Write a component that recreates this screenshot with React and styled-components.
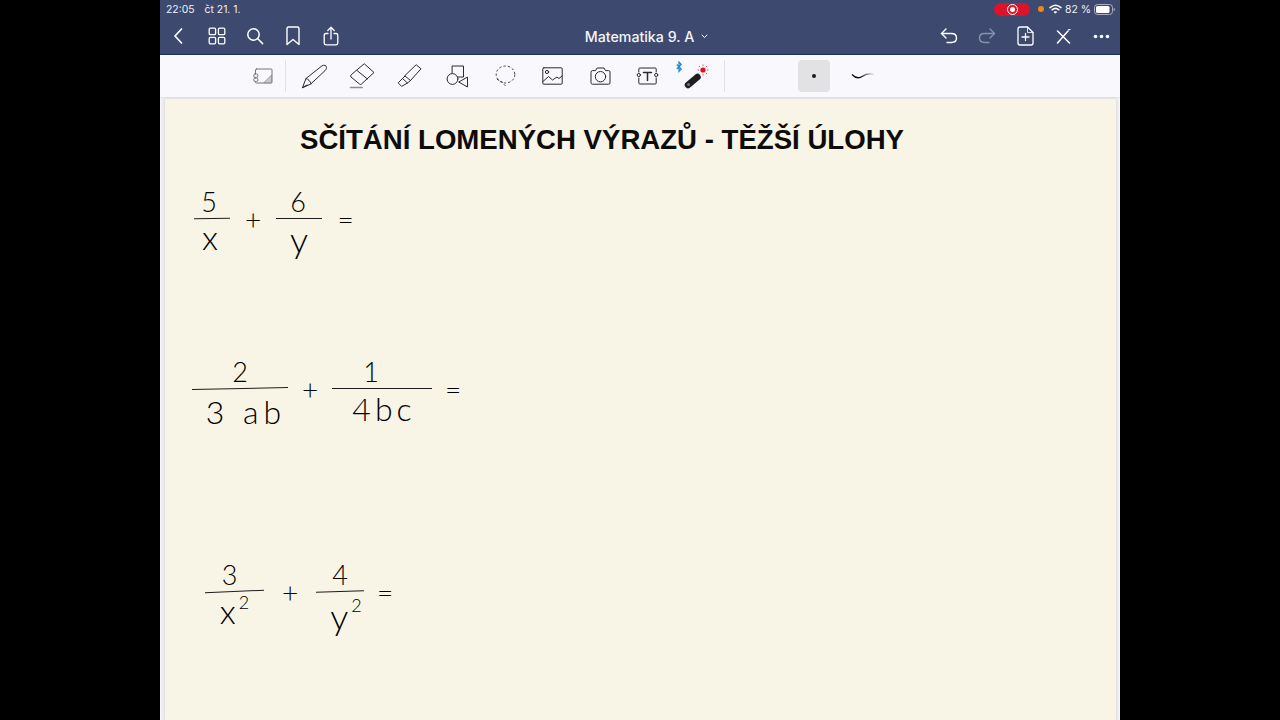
import React from 'react'
import styled, { createGlobalStyle } from 'styled-components'

const Global = createGlobalStyle`
  html, body { margin: 0; background: #000; height: 100%; overflow: hidden; }
`

const Screen = styled.div`
  width: 960px;
  height: 720px;
  margin: 0 auto;
  display: flex;
  flex-direction: column;
  overflow: hidden;
  background: #eeeef1;
  font-family: Inter, "Liberation Sans", sans-serif;
`

const Header = styled.header`
  height: 54px;
  background: #3d496f;
  border-bottom: 1px solid #16345a;
  color: #fff;
  flex: none;
`

const StatusBar = styled.div`
  height: 18px;
  display: flex;
  align-items: center;
  justify-content: space-between;
  padding: 0 5px 0 6px;
  font-size: 10.4px;
  color: #f1f2f6;
`

const StatusGroup = styled.div`
  display: flex;
  align-items: center;
  gap: ${(p) => p.$gap}px;
`

const RecordPill = styled.div`
  width: 36px;
  height: 13px;
  border-radius: 7px;
  background: #dc1429;
  display: flex;
  align-items: center;
  justify-content: center;
  margin-right: 5px;
`

const RecordDot = styled.div`
  width: 5px;
  height: 5px;
  border-radius: 50%;
  background: #fff;
  border: 2px solid #dc1429;
  outline: 1px solid #fff;
`

const OrangeDot = styled.div`
  width: 6px;
  height: 6px;
  border-radius: 50%;
  background: #ee8a12;
  margin-right: 2px;
`

const Nav = styled.nav`
  height: 36px;
  display: grid;
  grid-template-columns: 1fr auto 1fr;
  align-items: center;
`

const NavGroup = styled.div`
  display: flex;
  justify-content: ${(p) => (p.$end ? 'flex-end' : 'flex-start')};
`

const NavButton = styled.div`
  width: 38px;
  height: 36px;
  display: flex;
  align-items: center;
  justify-content: center;
  opacity: ${(p) => (p.$dim ? 0.4 : 1)};
`

const DocTitle = styled.div`
  display: flex;
  align-items: center;
  gap: 7px;
  padding-left: 13px;
  font-size: 14.2px;
  font-weight: 500;
  color: #f4f5f8;
`

const Toolbar = styled.div`
  height: 42px;
  flex: none;
  display: flex;
  align-items: center;
  background: #f9f8fc;
  border-bottom: 1px solid #e4e3e6;
  padding-left: 83px;
`

const Tool = styled.div`
  width: ${(p) => p.$w || 47.6}px;
  height: 42px;
  flex: none;
  display: flex;
  align-items: center;
  justify-content: center;
`

const Divider = styled.div`
  width: 1px;
  height: 32px;
  background: #e2e1e4;
  margin: 0 ${(p) => p.$right}px 0 ${(p) => p.$left}px;
  flex: none;
`

const SizeButton = styled.div`
  width: 32px;
  height: 32px;
  border-radius: 4px;
  background: #e2e1e3;
  display: flex;
  align-items: center;
  justify-content: center;
  margin: 0 21px 0 0;
  flex: none;
`

const SizeDot = styled.div`
  width: 4px;
  height: 4px;
  border-radius: 50%;
  background: #1a1a1a;
`

const Desk = styled.main`
  flex: 1;
  padding: 1px 4px 0 5px;
  min-height: 0;
  box-shadow: inset 1px 0 0 #f7f7f9, inset -1px 0 0 #f7f7f9;
`

const Page = styled.section`
  position: relative;
  height: 100%;
  background: #f8f4e6;
  box-shadow: 0 0 2px #c9c9cc;
  padding: 23px 0 0 135px;
  box-sizing: border-box;
`

const Title = styled.h1`
  margin: 0;
  font-family: "Liberation Sans", Arial, sans-serif;
  font-size: 27.6px;
  line-height: 36px;
  font-weight: 700;
  color: #0c0c0c;
  white-space: nowrap;
`

/* ruční poznámky leží na volném plátně stránky */
const Expr = styled.div`
  position: absolute;
  left: ${(p) => p.$x}px;
  top: ${(p) => p.$y}px;
  display: flex;
  align-items: center;
  font-family: Lato, "Open Sans", sans-serif;
  font-weight: 300;
  color: #000;
`

const Frac = styled.div`
  width: ${(p) => p.$w}px;
  flex: none;
  display: flex;
  flex-direction: column;
  align-items: center;
`

const Num = styled.div`
  height: 34px;
  display: flex;
  align-items: flex-end;
  justify-content: center;
  font-size: 27px;
  line-height: 32px;
  white-space: nowrap;
  transform: translate(${(p) => p.$dx || 0}px, 0);
`

const Den = styled.div`
  height: 34px;
  display: flex;
  align-items: flex-start;
  justify-content: center;
  font-size: ${(p) => p.$size || 30}px;
  line-height: normal;
  white-space: nowrap;
  letter-spacing: ${(p) => p.$track || 0}px;
  transform: translate(${(p) => p.$dx || 0}px, ${(p) => p.$dy || 0}px);
`

const Bar = styled.div`
  width: 100%;
  height: 1.4px;
  background: #1c1c1c;
  transform: rotate(${(p) => p.$tilt || 0}deg);
`

const Sign = styled.div`
  flex: none;
  width: ${(p) => p.$w}px;
  text-align: center;
  font-size: 28px;
  line-height: 30px;
`

const Sup = styled.span`
  font-size: 18px;
  line-height: normal;
  letter-spacing: 0;
  margin-left: 3px;
  margin-top: ${(p) => p.$top || 0}px;
`

const Svg = ({ w, h, vb, children, color = '#fff', sw = 1.5 }) => (
  <svg
    width={w}
    height={h}
    viewBox={vb || `0 0 ${w} ${h}`}
    fill="none"
    stroke={color}
    strokeWidth={sw}
    strokeLinecap="round"
    strokeLinejoin="round"
  >
    {children}
  </svg>
)

const INK = '#2b2b2e'

const BackIcon = () => (
  <Svg w={12} h={18} sw={1.7}>
    <path d="M8.5 2 L2 9 L8.5 16" />
  </Svg>
)
const GridIcon = () => (
  <Svg w={18} h={18} sw={1.3}>
    <rect x="1.2" y="1.2" width="6.4" height="6.4" rx="1.2" />
    <rect x="10.4" y="1.2" width="6.4" height="6.4" rx="1.2" />
    <rect x="1.2" y="10.4" width="6.4" height="6.4" rx="1.2" />
    <rect x="10.4" y="10.4" width="6.4" height="6.4" rx="1.2" />
  </Svg>
)
const SearchIcon = () => (
  <Svg w={18} h={18} sw={1.5}>
    <circle cx="7.5" cy="7.5" r="5.7" />
    <path d="M11.8 11.8 L16.6 16.6" />
  </Svg>
)
const BookmarkIcon = () => (
  <Svg w={16} h={20} sw={1.4}>
    <path d="M2 2.5 Q2 1 3.5 1 H12.5 Q14 1 14 2.5 V18.5 L8 13.5 L2 18.5 Z" />
  </Svg>
)
const ShareIcon = () => (
  <Svg w={16} h={20} sw={1.3}>
    <path d="M5 7.5 H3 Q1.2 7.5 1.2 9.3 V17 Q1.2 18.8 3 18.8 H13 Q14.8 18.8 14.8 17 V9.3 Q14.8 7.5 13 7.5 H11" />
    <path d="M8 13 V1.5 M4.8 4.5 L8 1.3 L11.2 4.5" />
  </Svg>
)
const UndoIcon = () => (
  <Svg w={18} h={18} sw={1.4}>
    <path d="M6 2 L1.5 6.5 L6 11" />
    <path d="M1.5 6.5 H11.5 Q16.5 6.5 16.5 11 Q16.5 15.5 11.5 15.5 H7" />
  </Svg>
)
const RedoIcon = () => (
  <Svg w={18} h={18} sw={1.4}>
    <path d="M12 2 L16.5 6.5 L12 11" />
    <path d="M16.5 6.5 H6.5 Q1.5 6.5 1.5 11 Q1.5 15.5 6.5 15.5 H11" />
  </Svg>
)
const AddPageIcon = () => (
  <Svg w={17} h={20} sw={1.3}>
    <path d="M10.5 1 H3 Q1 1 1 3 V17 Q1 19 3 19 H14 Q16 19 16 17 V6.5 Z" />
    <path d="M10.5 1 V6.5 H16" strokeWidth="0.8" />
    <path d="M8.5 7.5 V14.5 M5 11 H12" />
  </Svg>
)
const CloseToolIcon = () => (
  <Svg w={15} h={15} sw={1.5}>
    <path d="M1.5 14 L12 2 M1.5 2 L13.5 14" />
    <path d="M12.5 0.8 L14 0.4" strokeWidth="1.2" />
  </Svg>
)
const DotsIcon = () => (
  <svg width="17" height="5" viewBox="0 0 17 5" fill="#fff">
    <circle cx="2.5" cy="2.5" r="1.8" />
    <circle cx="8.5" cy="2.5" r="1.8" />
    <circle cx="14.5" cy="2.5" r="1.8" />
  </svg>
)
const Caret = () => (
  <Svg w={7} h={5} sw={1}>
    <path d="M1 1 L3.5 3.6 L6 1" />
  </Svg>
)
const WifiIcon = () => (
  <Svg w={13} h={10} sw={1.5}>
    <path d="M1 3.6 Q6.5 -1 12 3.6" />
    <path d="M3.1 5.8 Q6.5 3 9.9 5.8" />
    <path d="M5.4 7.9 Q6.5 7.1 7.6 7.9 L6.5 9 Z" fill="#fff" strokeWidth="1" />
  </Svg>
)
const BatteryIcon = () => (
  <svg width="21" height="11" viewBox="0 0 21 11">
    <rect x="0.5" y="0.5" width="18" height="10" rx="3" fill="none" stroke="#aab0c2" />
    <rect x="2" y="2" width="13.5" height="7" rx="1.5" fill="#fff" />
    <path d="M19.7 3.8 Q21 4.4 21 5.5 Q21 6.6 19.7 7.2 Z" fill="#aab0c2" />
  </svg>
)
const NotebookIcon = () => (
  <Svg w={20} h={16} color="#77777a" sw={1}>
    <rect x="2.5" y="1" width="16.5" height="14" rx="1" />
    <path d="M11 14.5 L18.5 7 V14.5 Z" fill="#c9c9cb" strokeWidth="0.6" />
    <rect x="0.8" y="6" width="4" height="3.4" rx="1.2" fill="#f9f8fc" />
    <rect x="0.8" y="10" width="4" height="3.4" rx="1.2" fill="#f9f8fc" />
  </Svg>
)
const PenIcon = () => (
  <Svg w={27} h={25} color={INK} sw={1}>
    <path d="M1.5 23.5 L5 14.5 L21 1.8 C23 0.6 25.6 1.4 25.5 3.6 C25.4 5 24.4 6.4 23 7.6 L10 19.8 Z" />
    <path d="M5 14.5 C7.2 15 9.4 17.2 10 19.8" />
    <path d="M1.5 23.5 L6 21" />
  </Svg>
)
const EraserIcon = () => (
  <Svg w={26} h={26} color={INK} sw={1}>
    <path d="M15.5 1 L25 9.5 L12.5 21 Q11.5 22 10.5 21 L2 14 Q1 13 2 12 Z" />
    <path d="M8 7.5 L18.5 16" />
    <path d="M1.5 24.5 H13" stroke="#8e8e91" strokeWidth="1.6" />
  </Svg>
)
const HighlighterIcon = () => (
  <Svg w={25} h={24} color={INK} sw={1}>
    <path d="M19.5 1 L24 4.8 L13.5 16.5 L8 12 Z" />
    <path d="M8 12 L5.5 14.5 L10.5 19 L13.5 16.5" />
    <path d="M5.5 14.5 L1.2 18.8 L4.6 22.4 L10.5 19" />
  </Svg>
)
const ShapesIcon = () => (
  <Svg w={23} h={23} color={INK} sw={1}>
    <rect x="6.5" y="1" width="11" height="11" />
    <circle cx="6.5" cy="14" r="5.4" fill="#f9f8fc" />
    <path d="M21.5 12.5 V22 L13 17.2 Z" fill="#f9f8fc" />
  </Svg>
)
const LassoIcon = () => (
  <Svg w={21} h={23} color={INK} sw={0.9}>
    <ellipse cx="10.5" cy="9.5" rx="9.3" ry="8.5" strokeDasharray="2.4 2" strokeLinecap="butt" />
    <path d="M2 14 C4 16 7 16 8 18 C9 20 10.5 20 11 22" strokeDasharray="2.4 2" strokeLinecap="butt" />
  </Svg>
)
const ImageIcon = () => (
  <Svg w={21} h={18} color={INK} sw={1}>
    <rect x="0.8" y="0.8" width="19.4" height="16.4" rx="1" />
    <circle cx="5" cy="5" r="1.6" />
    <path d="M1 14.5 L6.5 9.5 L10.5 13 L15 10 L17 11.5 L20 9" />
  </Svg>
)
const CameraIcon = () => (
  <Svg w={21} h={18} color={INK} sw={1}>
    <path d="M1 5 Q1 3.6 2.4 3.6 H5.5 L7 1 H14 L15.5 3.6 H18.6 Q20 3.6 20 5 V16 Q20 17.2 18.6 17.2 H2.4 Q1 17.2 1 16 Z" />
    <circle cx="10.5" cy="9.7" r="5.2" />
  </Svg>
)
const TextBoxIcon = () => (
  <Svg w={23} h={18} color={INK} sw={1}>
    <path d="M2.8 5 V2 Q2.8 1 3.8 1 H19.2 Q20.2 1 20.2 2 V5 M2.8 11 V16 Q2.8 17 3.8 17 H19.2 Q20.2 17 20.2 16 V11" />
    <circle cx="2.8" cy="8" r="1.6" />
    <circle cx="20.2" cy="8" r="1.6" />
    <path d="M7.5 5.5 H15.5 M11.5 5.5 V13.5" strokeWidth="1.5" />
  </Svg>
)
const LaserIcon = () => (
  <svg width="40" height="30" viewBox="0 0 40 30" fill="none">
    <path d="M0.8 3.5 L5.2 8 L3 10.5 V1 L5.2 3.5 L0.8 8" stroke="#1c86d8" strokeWidth="1.2" />
    <path d="M12 24 L21.5 16" stroke="#1e1e20" strokeWidth="6.5" strokeLinecap="round" />
    <circle cx="12.5" cy="23.5" r="1.5" fill="#777" />
    <circle cx="27" cy="9" r="2.6" fill="#e3101c" />
    <path d="M27 3.5 V5 M27 13 V14.5 M21.5 9 H23 M31 9 H32.5 M23 5 L24.2 6.2 M29.8 11.8 L31 13 M31 5 L29.8 6.2" stroke="#ee4450" strokeWidth="0.9" />
  </svg>
)
const StrokeSample = () => (
  <svg width="24" height="8" viewBox="0 0 24 8" fill="none">
    <defs>
      <linearGradient id="strokeFade" x1="0" x2="1">
        <stop offset="0.4" stopColor="#111" />
        <stop offset="1" stopColor="#111" stopOpacity="0.05" />
      </linearGradient>
    </defs>
    <path d="M1 2.5 C5 7 9 6 12 4 C15 2 19 1.5 23 2.5" stroke="url(#strokeFade)" strokeWidth="1.3" />
  </svg>
)

export default function App() {
  return (
    <>
      <Global />
      <Screen>
        <Header>
          <StatusBar>
            <StatusGroup $gap={10}>
              <span>22:05</span>
              <span>čt 21. 1.</span>
            </StatusGroup>
            <StatusGroup $gap={3}>
              <RecordPill>
                <RecordDot />
              </RecordPill>
              <OrangeDot />
              <WifiIcon />
              <span>82 %</span>
              <BatteryIcon />
            </StatusGroup>
          </StatusBar>
          <Nav>
            <NavGroup>
              <NavButton><BackIcon /></NavButton>
              <NavButton><GridIcon /></NavButton>
              <NavButton><SearchIcon /></NavButton>
              <NavButton><BookmarkIcon /></NavButton>
              <NavButton><ShareIcon /></NavButton>
            </NavGroup>
            <DocTitle>
              Matematika 9. A
              <Caret />
            </DocTitle>
            <NavGroup $end>
              <NavButton><UndoIcon /></NavButton>
              <NavButton $dim><RedoIcon /></NavButton>
              <NavButton><AddPageIcon /></NavButton>
              <NavButton><CloseToolIcon /></NavButton>
              <NavButton><DotsIcon /></NavButton>
            </NavGroup>
          </Nav>
        </Header>
        <Toolbar>
          <Tool $w={40}><NotebookIcon /></Tool>
          <Divider $left={2} $right={5} />
          <Tool><PenIcon /></Tool>
          <Tool><EraserIcon /></Tool>
          <Tool><HighlighterIcon /></Tool>
          <Tool><ShapesIcon /></Tool>
          <Tool><LassoIcon /></Tool>
          <Tool><ImageIcon /></Tool>
          <Tool><CameraIcon /></Tool>
          <Tool><TextBoxIcon /></Tool>
          <Tool><LaserIcon /></Tool>
          <Divider $left={5} $right={73} />
          <SizeButton><SizeDot /></SizeButton>
          <StrokeSample />
        </Toolbar>
        <Desk>
          <Page>
            <Title>SČÍTÁNÍ LOMENÝCH VÝRAZŮ - TĚŽŠÍ ÚLOHY</Title>

            <Expr $x={29} $y={85}>
              <Frac $w={36}>
                <Num $dx={-3}>5</Num>
                <Bar $tilt={-1} />
                <Den $dx={-2} $dy={-3} $size={34}>x</Den>
              </Frac>
              <Sign $w={46}>+</Sign>
              <Frac $w={46}>
                <Num $dx={-1}>6</Num>
                <Bar />
                <Den $size={36} $dy={-2}>y</Den>
              </Frac>
              <Sign $w={47}>=</Sign>
            </Expr>

            <Expr $x={27} $y={255}>
              <Frac $w={96}>
                <Num>2</Num>
                <Bar $tilt={-1.2} />
                <Den $dx={6} $dy={3} $track={5} $size={32}>3 ab</Den>
              </Frac>
              <Sign $w={44}>+</Sign>
              <Frac $w={100}>
                <Num $dx={-11}>1</Num>
                <Bar />
                <Den $dx={2} $track={4} $size={32}>4bc</Den>
              </Frac>
              <Sign $w={42}>=</Sign>
            </Expr>

            <Expr $x={40} $y={458}>
              <Frac $w={59}>
                <Num $dx={-5}>3</Num>
                <Bar $tilt={-2.5} />
                <Den $dy={-2} $size={34}>x<Sup $top={1}>2</Sup></Den>
              </Frac>
              <Sign $w={52}>+</Sign>
              <Frac $w={48}>
                <Num>4</Num>
                <Bar $tilt={-2} />
                <Den $dx={6} $dy={2} $size={36}>y<Sup>2</Sup></Den>
              </Frac>
              <Sign $w={42}>=</Sign>
            </Expr>
          </Page>
        </Desk>
      </Screen>
    </>
  )
}
